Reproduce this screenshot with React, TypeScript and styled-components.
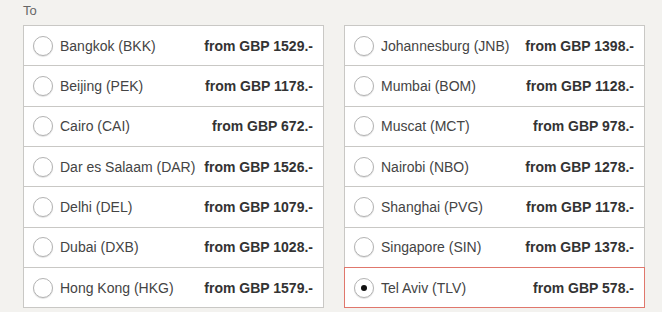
import React from "react";
import styled, { createGlobalStyle } from "styled-components";

const GlobalStyle = createGlobalStyle`
  body {
    margin: 0;
    background: #f3f2ef;
    font-family: Arial, "Liberation Sans", sans-serif;
  }
`;

const Page = styled.div`
  padding: 3px 0 0 23px;
`;

const Label = styled.div`
  font-size: 13px;
  line-height: 15px;
  color: #666;
  margin-bottom: 7px;
`;

const Columns = styled.div`
  display: grid;
  grid-template-columns: 301px 301px;
  column-gap: 20px;
`;

const List = styled.div`
  display: flex;
  flex-direction: column;
`;

const Row = styled.label<{ $selected?: boolean }>`
  position: relative;
  z-index: ${(p) => (p.$selected ? 1 : 0)};
  box-sizing: border-box;
  height: 41.33px;
  margin-top: -1px;
  display: flex;
  align-items: center;
  padding: 0 10px 0 9px;
  background: #fff;
  border: 1px solid ${(p) => (p.$selected ? "#e0776c" : "#c9c8c5")};
  font-size: 14px;
  color: #444;
  cursor: pointer;

  &:first-child {
    margin-top: 0;
  }
`;

const Radio = styled.span<{ $checked?: boolean }>`
  box-sizing: border-box;
  width: 20px;
  height: 20px;
  border-radius: 50%;
  border: 1px solid #b3b3b3;
  background: #fff;
  box-shadow: 0 1px 1px rgba(0, 0, 0, 0.12);
  display: flex;
  align-items: center;
  justify-content: center;
  margin-right: 7px;
  flex-shrink: 0;

  &::after {
    content: "";
    width: 6px;
    height: 6px;
    border-radius: 50%;
    background: #111;
    display: ${(p) => (p.$checked ? "block" : "none")};
  }
`;

const City = styled.span`
  flex: 1;
  white-space: nowrap;
`;

const Price = styled.span`
  font-weight: bold;
  color: #333;
  white-space: nowrap;
`;

type Dest = { city: string; price: number };

const left: Dest[] = [
  { city: "Bangkok (BKK)", price: 1529 },
  { city: "Beijing (PEK)", price: 1178 },
  { city: "Cairo (CAI)", price: 672 },
  { city: "Dar es Salaam (DAR)", price: 1526 },
  { city: "Delhi (DEL)", price: 1079 },
  { city: "Dubai (DXB)", price: 1028 },
  { city: "Hong Kong (HKG)", price: 1579 },
];

const right: Dest[] = [
  { city: "Johannesburg (JNB)", price: 1398 },
  { city: "Mumbai (BOM)", price: 1128 },
  { city: "Muscat (MCT)", price: 978 },
  { city: "Nairobi (NBO)", price: 1278 },
  { city: "Shanghai (PVG)", price: 1178 },
  { city: "Singapore (SIN)", price: 1378 },
  { city: "Tel Aviv (TLV)", price: 578 },
];

const App = () => {
  const [selected, setSelected] = React.useState("Tel Aviv (TLV)");

  const renderList = (items: Dest[]) => (
    <List>
      {items.map((d) => {
        const on = d.city === selected;
        return (
          <Row key={d.city} $selected={on} onClick={() => setSelected(d.city)}>
            <Radio $checked={on} />
            <City>{d.city}</City>
            <Price>from GBP {d.price}.-</Price>
          </Row>
        );
      })}
    </List>
  );

  return (
    <Page>
      <GlobalStyle />
      <Label>To</Label>
      <Columns>
        {renderList(left)}
        {renderList(right)}
      </Columns>
    </Page>
  );
};

export default App;
